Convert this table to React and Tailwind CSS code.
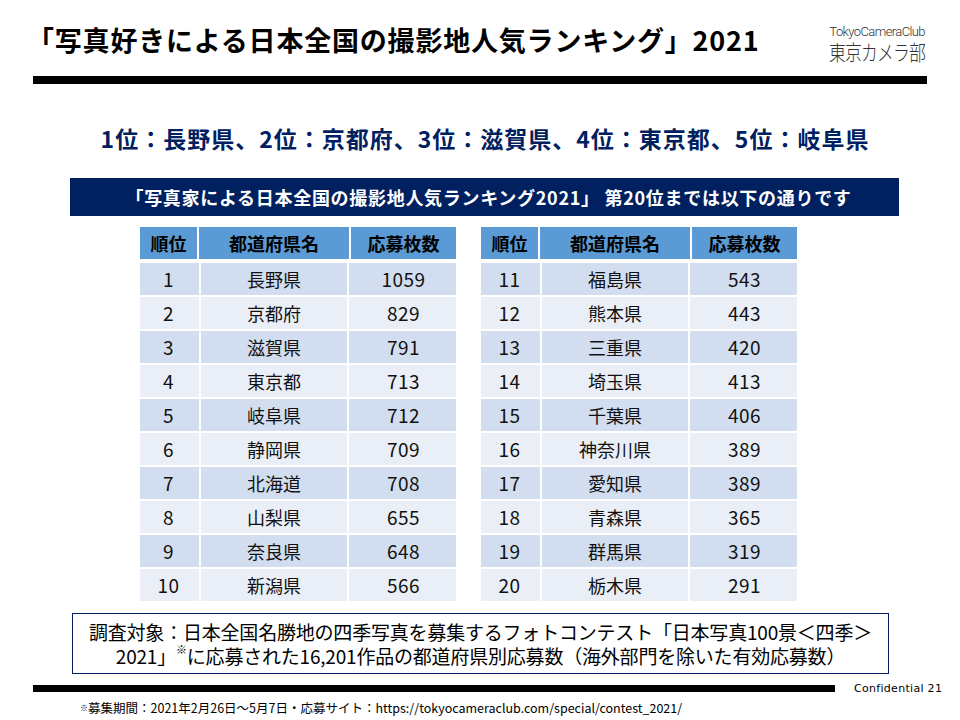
const left = [
  [1, '長野県', 1059],
  [2, '京都府', 829],
  [3, '滋賀県', 791],
  [4, '東京都', 713],
  [5, '岐阜県', 712],
  [6, '静岡県', 709],
  [7, '北海道', 708],
  [8, '山梨県', 655],
  [9, '奈良県', 648],
  [10, '新潟県', 566],
];

const right = [
  [11, '福島県', 543],
  [12, '熊本県', 443],
  [13, '三重県', 420],
  [14, '埼玉県', 413],
  [15, '千葉県', 406],
  [16, '神奈川県', 389],
  [17, '愛知県', 389],
  [18, '青森県', 365],
  [19, '群馬県', 319],
  [20, '栃木県', 291],
];

function RankTable({ rows }) {
  return (
    <div className="w-[316px] flex flex-col bg-white text-black">
      <div className="grid grid-cols-[57px_150px_105px] gap-x-[2px] h-[32px] mb-[4px] font-bold text-[18px]">
        <div className="bg-[#5B9BD5] flex items-center justify-center">順位</div>
        <div className="bg-[#5B9BD5] flex items-center justify-center">都道府県名</div>
        <div className="bg-[#5B9BD5] flex items-center justify-center">応募枚数</div>
      </div>
      <div className="flex flex-col gap-y-[2px]">
        {rows.map(([rank, name, count], i) => (
          <div
            key={rank}
            className={`grid grid-cols-[57px_150px_105px] gap-x-[2px] h-[32px] text-[19px] text-[#111] ${
              i % 2 === 0 ? 'bg-[#D2DEEF]' : 'bg-[#EAEFF7]'
            }`}
          >
            <div className="flex items-center justify-center tracking-[0.5px]">{rank}</div>
            <div className="flex items-center justify-center border-x-2 border-white text-[18px]">{name}</div>
            <div className="flex items-center justify-center tracking-[0.5px]">{count}</div>
          </div>
        ))}
      </div>
    </div>
  );
}

export default function App() {
  return (
    <div className="w-[960px] h-[720px] bg-white overflow-hidden font-['Noto_Sans_CJK_JP',sans-serif]">
      {/* header */}
      <div className="flex items-start justify-between pl-[27px] pr-[27px] pt-[22px] h-[76px]">
        <h1 className="text-[27px] font-bold leading-[36px] text-black tracking-[0.8px]">
          「写真好きによる日本全国の撮影地人気ランキング」2021
        </h1>
        <div className="mt-[3px] mr-[8px] flex flex-col items-end gap-[2px] text-[#333]">
          <span className="text-[13px] leading-[14px] font-light tracking-[-0.6px] font-['Roboto',sans-serif]">TokyoCameraClub</span>
          <span className="text-[21px] leading-[21px] font-light tracking-[-1px] scale-x-[0.8] origin-right">東京カメラ部</span>
        </div>
      </div>
      <div className="mx-[33px] h-[8px] bg-black" />

      {/* top 5 */}
      <div className="mt-[40px] h-[28px] flex items-center justify-center pl-[10px] text-[23px] font-bold text-[#002060] leading-none tracking-[1px]">
        1位：長野県、2位：京都府、3位：滋賀県、4位：東京都、5位：岐阜県
      </div>

      {/* banner */}
      <div className="mt-[26px] ml-[70px] w-[829px] h-[38px] bg-[#002060] flex items-center justify-center pl-[8px] text-white font-bold text-[18px] tracking-[0.7px]">
        「写真家による日本全国の撮影地人気ランキング2021」 第20位までは以下の通りです
      </div>

      {/* tables */}
      <div className="mt-[11px] pl-[140px] flex gap-[25px]">
        <RankTable rows={left} />
        <RankTable rows={right} />
      </div>

      {/* note */}
      <div className="mt-[12px] ml-[72px] w-[817px] h-[61px] border border-[#002060] flex flex-col items-center justify-center gap-[1px] text-[19px] leading-[23px] text-black tracking-[-0.2px]">
        <p>調査対象：日本全国名勝地の四季写真を募集するフォトコンテスト「日本写真100景＜四季＞</p>
        <p>
          2021」<span className="text-[11px] leading-[11px] align-top">※</span>に応募された16,201作品の都道府県別応募数（海外部門を除いた有効応募数）
        </p>
      </div>

      {/* footer */}
      <div className="mt-[9px] flex items-center">
        <div className="ml-[33px] w-[802px] h-[7px] bg-black" />
        <span className="ml-[19px] text-[11px] leading-none text-black font-['DejaVu_Sans',sans-serif] tracking-[0.3px]">
          Confidential 21
        </span>
      </div>
      <div className="mt-[6px] pl-[80px] text-[12.5px] leading-[16px] text-black">
        <span className="text-[8px] align-top">※</span>募集期間：2021年2月26日～5月7日・応募サイト：https://tokyocameraclub.com/special/contest_2021/
      </div>
    </div>
  );
}
